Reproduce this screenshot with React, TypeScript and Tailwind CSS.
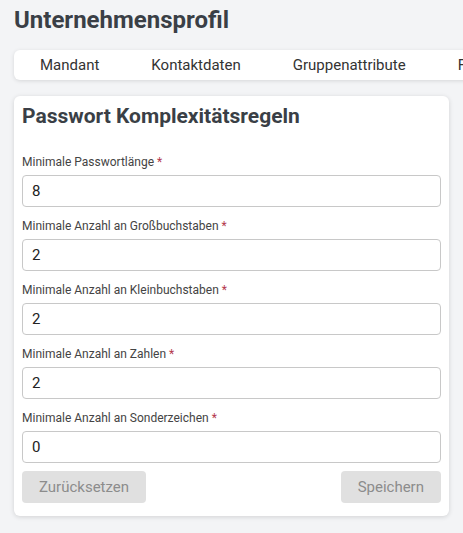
import React from "react";

const fields = [
  { label: "Minimale Passwortlänge", value: "8" },
  { label: "Minimale Anzahl an Großbuchstaben", value: "2" },
  { label: "Minimale Anzahl an Kleinbuchstaben", value: "2" },
  { label: "Minimale Anzahl an Zahlen", value: "2" },
  { label: "Minimale Anzahl an Sonderzeichen", value: "0" },
];

export default function App() {
  return (
    <div
      className="w-[463px] h-[533px] overflow-hidden bg-[#f3f4f6] text-[#3b3f45]"
      style={{ fontFamily: "Roboto, 'Liberation Sans', sans-serif" }}
    >
      <div className="px-[14px] pt-[5px]">
        <h1 className="text-[24px] font-bold leading-[31px] text-[#3a3f46]">Unternehmensprofil</h1>
        <div className="mt-[14px] w-[600px] h-[30px] bg-white rounded-[6px] shadow-[0_1px_4px_rgba(0,0,0,0.12)] flex items-center gap-[52px] pl-[26px] text-[15px] text-[#333]">
          <div>Mandant</div>
          <div>Kontaktdaten</div>
          <div>Gruppenattribute</div>
          <div>Funktionen</div>
        </div>
        <div className="mt-[16px] w-[435px] bg-white rounded-[6px] shadow-[0_1px_5px_rgba(0,0,0,0.14)] px-[8px] pt-[6px] pb-[13px]">
          <h2 className="text-[21px] font-bold leading-[28px] text-[#3a3f46]">Passwort Komplexitätsregeln</h2>
          <div className="mt-[24px] flex flex-col gap-[11px]">
            {fields.map((f) => (
              <div key={f.label} className="flex flex-col">
                <label className="text-[12px] leading-[16px] text-[#444]">
                  {f.label} <span className="text-[#b4394d]">*</span>
                </label>
                <div className="mt-[5px] h-[32px] border border-[#c8c8c8] rounded-[4px] flex items-center px-[9px] text-[15px] text-[#222]">
                  {f.value}
                </div>
              </div>
            ))}
          </div>
          <div className="mt-[8px] flex justify-between">
            <button className="h-[32px] px-[17px] rounded-[4px] bg-[#e0e0e0] text-[15px] text-[#8c8c8c]">Zurücksetzen</button>
            <button className="h-[32px] px-[17px] rounded-[4px] bg-[#e0e0e0] text-[15px] text-[#8c8c8c]">Speichern</button>
          </div>
        </div>
      </div>
    </div>
  );
}
